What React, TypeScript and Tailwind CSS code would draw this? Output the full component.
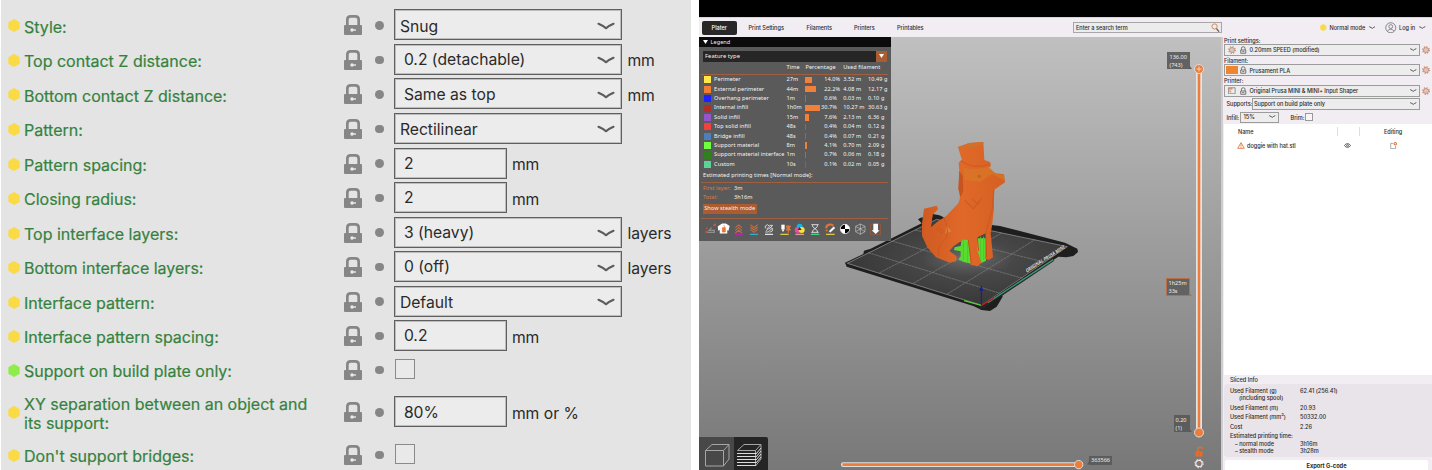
import React from "react";

type Setting = {
  label: string;
  kind: "select" | "combo" | "input" | "check";
  value?: string;
  unit?: string;
  green?: boolean;
  h?: string;
};

const settings: Setting[] = [
  { label: "Style:", kind: "select", value: "Snug" },
  { label: "Top contact Z distance:", kind: "combo", value: "0.2 (detachable)", unit: "mm" },
  { label: "Bottom contact Z distance:", kind: "combo", value: "Same as top", unit: "mm" },
  { label: "Pattern:", kind: "select", value: "Rectilinear" },
  { label: "Pattern spacing:", kind: "input", value: "2", unit: "mm" },
  { label: "Closing radius:", kind: "input", value: "2", unit: "mm" },
  { label: "Top interface layers:", kind: "combo", value: "3 (heavy)", unit: "layers" },
  { label: "Bottom interface layers:", kind: "combo", value: "0 (off)", unit: "layers" },
  { label: "Interface pattern:", kind: "select", value: "Default" },
  { label: "Interface pattern spacing:", kind: "input", value: "0.2", unit: "mm" },
  { label: "Support on build plate only:", kind: "check", green: true, h: "h-[33px]" },
  { label: "XY separation between an object and its support:", kind: "input", value: "80%", unit: "mm or %", h: "h-[52px]" },
  { label: "Don't support bridges:", kind: "check", h: "h-[33px]" },
];

function Hex({ className }: { className: string }) {
  return (
    <svg viewBox="0 0 12 13" className={className}>
      <path d="M6 .4 11.2 3.3V9.7L6 12.6.8 9.7V3.3Z" fill="currentColor" stroke="currentColor" strokeWidth=".8" strokeLinejoin="round" />
    </svg>
  );
}

function BigLock() {
  return (
    <svg viewBox="0 0 54 60" className="h-5 w-[18px] shrink-0">
      <path d="M10 32V14Q10 4 20 4H34Q44 4 44 14V32" fill="none" stroke="#868686" strokeWidth="8" />
      <rect y="30" width="54" height="30" rx="3" fill="#868686" />
      <circle cx="24" cy="45" r="5" fill="#ececec" />
      <path d="M24 45H36" stroke="#ececec" strokeWidth="4" />
    </svg>
  );
}

function Chevron({ className }: { className: string }) {
  return (
    <svg viewBox="0 0 18 9" className={className} fill="none" stroke="currentColor" strokeWidth="2.2" strokeLinecap="round" strokeLinejoin="round">
      <path d="M1.5 1.8 Q7 4.2 9 6.2 Q11 4.2 16.5 1.8" />
    </svg>
  );
}

function SettingRow({ s }: { s: Setting }) {
  const wide = s.kind === "select" || s.kind === "combo";
  return (
    <div className={`flex shrink-0 items-center ${s.h ?? "h-[34.52px]"}`}>
      <Hex className={`relative top-px h-[13px] w-3 shrink-0 ${s.green ? "text-[#8fec4b]" : "text-[#fadb45]"}`} />
      <div className="ml-[4px] w-[320.3px] shrink-0 pr-5 pt-[4px] text-[16px] leading-[18.7px] text-[#35823e] [text-stroke:0.2px] [-webkit-text-stroke:0.2px_#35823e]">{s.label}</div>
      <div className="relative top-[0.5px] flex items-center">
        <BigLock />
        <div className="ml-[12.8px] size-[8.6px] rounded-full bg-[#868686]" />
      </div>
      {s.kind === "check" ? (
        <div className="ml-[11.5px] size-5 border-[1.4px] border-[#8a8a8a] bg-[#e9e9e9]" />
      ) : (
        <div className={`ml-[10.7px] flex h-[31px] items-center justify-between border border-[#5f5f5f] bg-[#ececec] pr-[6.5px] shadow-[inset_0_0_0_1px_#bdbdbd] ${wide ? "w-[228px]" : "w-[112.5px]"} ${s.kind === "select" ? "pl-[4.5px]" : "pl-[8.5px]"}`}>
          <span className={s.kind === "select" ? "pt-[4px]" : "pt-[1.5px]"}>{s.value}</span>
          {wide && <Chevron className="mt-[3px] h-[9px] w-[18px] text-[#5c5c5c]" />}
        </div>
      )}
      {s.unit && <span className="ml-[5px] pt-[4px]">{s.unit}</span>}
    </div>
  );
}

const legend: [string, string, string, string, string, string, string][] = [
  ["bg-[#ffe64d]", "Perimeter", "27m", "14.0%", "3.52 m", "10.49 g", "w-[7px]"],
  ["bg-[#f07c35]", "External perimeter", "44m", "22.2%", "4.08 m", "12.17 g", "w-[11px]"],
  ["bg-[#1f1fff]", "Overhang perimeter", "1m", "0.6%", "0.03 m", "0.10 g", "w-[0.5px] opacity-50"],
  ["bg-[#b03029]", "Internal infill", "1h0m", "30.7%", "10.27 m", "30.63 g", "w-[14.5px]"],
  ["bg-[#9654cc]", "Solid infill", "15m", "7.6%", "2.13 m", "6.36 g", "w-[4px]"],
  ["bg-[#f04040]", "Top solid infill", "48s", "0.4%", "0.04 m", "0.12 g", "w-[0.5px] opacity-40"],
  ["bg-[#4d80ba]", "Bridge infill", "48s", "0.4%", "0.07 m", "0.21 g", "w-[0.5px] opacity-40"],
  ["bg-[#70ff40]", "Support material", "8m", "4.1%", "0.70 m", "2.09 g", "w-[2px]"],
  ["bg-[#308020]", "Support material interface", "1m", "0.7%", "0.06 m", "0.18 g", "w-[0.5px] opacity-50"],
  ["bg-[#5ed194]", "Custom", "10s", "0.1%", "0.02 m", "0.05 g", "w-[0.5px] opacity-30"],
];

function LegendIcons() {
  return (
    <svg viewBox="0 0 570 48" className="mt-[1.5px] h-4 w-[190px] shrink-0" fill="none" strokeWidth="3.5">
      <g stroke="#b9623a">
        <path d="M22 34H46V28H30L38 20" stroke="#8f8f8f" />
        <path d="M21 24l4-4M44 14l6-6" />
        <circle cx="23" cy="33" r="2" />
        <circle cx="47" cy="12" r="2" fill="#b9623a" />
      </g>
      <path d="M58 17 70 9H80L90 16 87 27 83 23V36H64V23L59 26Z" fill="#fff" stroke="#fff" />
      <path d="M70 20h9v13h-9zM74 12l4 8" fill="#e8752f" stroke="#e8752f" strokeWidth="2" />
      <path d="M109 20l10-8 10 8M109 28l10-8 10 8M109 36l10-8 10 8" stroke="#c9683a" />
      <path d="M107 40h24" stroke="#c11fc1" />
      <path d="M154 11l11 9 11-9M154 18l11 9 11-9M154 25l11 9 11-9" stroke="#c9683a" />
      <path d="M153 40h24" stroke="#2fb6cf" />
      <path d="M199 22v-7l7-4 5 5-8 8M211 13h10l-9 10M199 33h9l12-12v9l-8 4M201 29l18-13" stroke="#e8e8e8" strokeWidth="2.5" />
      <path d="M198 40h24" stroke="#eee" />
      <path d="M247 11h10v13h-10z" fill="#fff" />
      <path d="M247 25h10l-5 8z" fill="#fff" />
      <path d="M262 15h12l-3 7 4 5h-14l4-5zM268 27v9" fill="#e8752f" stroke="#e8752f" strokeWidth="3" />
      <path d="M244 40h25" stroke="#e8d34a" />
      <circle cx="302" cy="17" r="9" fill="#19b5e0" />
      <circle cx="296" cy="27" r="9" fill="#e84fa0" />
      <circle cx="308" cy="27" r="9" fill="#f3e53b" />
      <path d="M302 18l6 9h-12z" fill="#333" />
      <path d="M289 40h26" stroke="#f0a0a0" />
      <path d="M337 11h22M337 34h22M341 12v5l7 6 7-6v-5M341 34v-5l7-6 7 6v5" stroke="#eee" strokeWidth="2.5" />
      <path d="M336 40h25" stroke="#3fe08a" />
      <path d="M382 22a12 10 0 0 1 21-8M383 26v5" stroke="#e8752f" strokeWidth="6" />
      <path d="M390 31l14-14 4 4-14 13z" fill="#fff" stroke="#fff" strokeWidth="1" />
      <path d="M381 40h26" stroke="#e8d34a" />
      <circle cx="438" cy="24" r="14" fill="#fff" stroke="#fff" strokeWidth="2" />
      <path d="M438 24V11A13 13 0 0 0 425 24ZM438 24V37A13 13 0 0 0 451 24Z" fill="#000" />
      <path d="M484 9l14 7v16l-14 8-14-8V16zM470 16l14 8 14-8M484 24v16M470 32l14-8 14 8M484 9v15" stroke="#c4c4c4" strokeWidth="2" />
      <rect x="515" y="9" width="30" height="31" stroke="#a05a36" strokeWidth="2" />
      <path d="M523 8h14v20h5l-12 11-12-11h5z" fill="#fff" />
    </svg>
  );
}

function Legend() {
  return (
    <div className="absolute left-0 top-0 flex h-[204px] w-[191.5px] flex-col bg-[#5a5a5a] font-['Noto_Sans','Open_Sans',sans-serif] text-[5.55px] font-normal leading-[9.4px] tracking-[0.07px] whitespace-nowrap text-[#f4f4f4]">
      <div className="flex h-[10px] shrink-0 items-center bg-[#0b0b0b] pl-[3.5px]">
        <svg viewBox="0 0 10 8" className="h-[4px] w-[5px]"><path d="M0 0h10L5 8z" fill="#fff" /></svg>
        <span className="ml-[3px] pt-[1.5px]">Legend</span>
      </div>
      <div className="ml-1 mt-[4px] flex h-[10.7px] w-[184px] shrink-0 items-center justify-between bg-[#262626]">
        <span className="ml-[2px] pt-[1px] text-[5.8px]">Feature type</span>
        <div className="flex h-full w-[11px] items-center justify-center bg-[#ab5c31]">
          <svg viewBox="0 0 10 8" className="h-[4px] w-[5px]"><path d="M0 0h10L5 8z" fill="#fff" /></svg>
        </div>
      </div>
      <div className="mt-[1px] flex h-[10.5px] shrink-0 items-center">
        <span className="ml-[87.5px] w-[19px]">Time</span>
        <span className="w-[37.7px]">Percentage</span>
        <span>Used filament</span>
      </div>
      <div className="ml-[2px] mt-px h-px w-[187px] shrink-0 bg-[#a0603f]" />
      {legend.map(([c, name, time, pct, m, g, w]) => (
        <div key={name} className="flex h-[9.4px] shrink-0 items-center">
          <div className={`ml-[4.5px] h-[7px] w-[7px] ${c}`} />
          <span className="ml-[3.6px] w-[72.4px]">{name}</span>
          <span className="w-[19px]">{time}</span>
          <span className="flex w-[18.8px]"><span className={`h-[6.4px] bg-[#f0803c] ${w}`} /></span>
          <span className={pct === "30.7%" ? "-ml-[3.4px] w-[22.4px]" : "w-[19px]"}>{pct}</span>
          <span className="w-[24.8px]">{m}</span>
          <span>{g}</span>
        </div>
      ))}
      <div className="mt-[2px] pl-1">Estimated printing times [Normal mode]:</div>
      <div className="ml-[2px] mt-px h-px w-[187px] shrink-0 bg-[#a0603f]" />
      <div className="mt-[1.5px] flex pl-1"><span className="w-[31px] text-[#dd7a45]">First layer:</span>3m</div>
      <div className="flex pl-1"><span className="w-[31px] text-[#dd7a45]">Total:</span>3h16m</div>
      <div className="ml-1 mt-[1px] flex h-[10.4px] w-[53.5px] shrink-0 items-center justify-center bg-[#ab5c31]">Show stealth mode</div>
      <div className="ml-[2px] mt-[4px] h-px w-[187px] shrink-0 bg-[#a0603f]" />
      <LegendIcons />
    </div>
  );
}

function Scene() {
  return (
    <svg viewBox="0 0 750 570" className="absolute left-[141px] top-[93px] h-[190px] w-[250px]">
      <defs>
        <radialGradient id="bed" cx=".55" cy=".45" r=".6">
          <stop offset="0" stopColor="#6a6a6a" />
          <stop offset=".35" stopColor="#474747" />
          <stop offset="1" stopColor="#363636" />
        </radialGradient>
        <linearGradient id="fur" x1="0" x2="1">
          <stop offset="0" stopColor="#cf5a20" />
          <stop offset=".5" stopColor="#e0692a" />
          <stop offset="1" stopColor="#d55f20" />
        </linearGradient>
      </defs>
      <path d="M15 398L70 372 72 362 92 356 245 280 234 268 242 263 270 258 278 252 298 256 330 270 480 288 675 338 712 356 714 366 700 378 680 382 655 380 486 492 488 500 470 530 450 543 425 540 400 528 20 410Z" fill="#1e1e1e" />
      <path d="M22 400L290 268 682 350 425 526Z" fill="url(#bed)" stroke="#a0a0a0" strokeWidth="2" />
      <path d="M420 536L640 388" stroke="#262626" strokeWidth="10" />
      <g stroke="#8b8b8b" strokeWidth="1.7" fill="none" strokeDasharray="9 1.5">
        <path d="M118 429L385 288M220 460L485 309M322 492L585 329" />
        <path d="M85 368L480 490M155 333L548 445M225 300L612 396" />
      </g>
      <path d="M443 518L640 389" stroke="#3b9677" strokeWidth="4" />
      <text transform="matrix(.83 -.53 .35 .94 560 428)" fontFamily="Noto Sans, sans-serif" fontSize="15" fontWeight="700" fill="#ddd" textLength="138" lengthAdjust="spacingAndGlyphs">ORIGINAL PRUSA MINI</text>
      <path d="M365 325H438V392L425 398 400 402 372 396 355 388 362 380 362 364 342 360 344 352 362 348Z" fill="#59dc31" />
      <path d="M370 330V392M383 335V396M422 320V396M431 320V390" stroke="#4cc72b" strokeWidth="3" />
      <path d="M252 236L290 227 294 238 278 254 273 292 292 275 318 259 355 220 360 205 356 172 358 122 356 98 366 88 362 78 354 51 388 39 430 36 433 90 450 96 453 107 446 114 466 130 492 133 495 157 462 180 462 235 456 288 452 310 458 370 459 382 448 389 435 386 438 310 414 321 412 360 424 400 412 409 392 404 385 330 370 329 342 347 328 363 350 379 348 394 330 398 288 382 262 352 246 318 246 280Z" fill="url(#fur)" />
      <path d="M354 51L388 39 430 36 429 44 402 50 360 57Z" fill="#d0702a" />
      <path d="M371 113Q410 125 447 108L464 131 491 135 493 152 458 132 420 155 374 150Z" fill="#d77b27" opacity=".6" />
      <path d="M363 92Q400 119 449 103M374 210L400 236 426 204M397 208L414 223 425 205" stroke="#cf5c22" strokeWidth="4" fill="none" />
      <path d="M358 122L368 137 370 182 362 202 355 178Z" fill="#c5541e" />
      <circle cx="418" cy="139" r="5" fill="#c0641f" />
      <path d="M278 254L272 292 284 324 270 348 253 320 252 278Z" fill="#d35d24" />
      <path d="M320 286l15 18-20 7z" fill="#dd7f35" />
      <path d="M310 262Q330 298 318 326Q288 352 296 376M288 298l20 12M294 292l20 14M462 180L456 240 438 308" stroke="#cc5822" strokeWidth="3" fill="none" />
      <path d="M385 330L394 401M412 322L416 363M437 310L440 380" stroke="#c5531f" strokeWidth="3" />
      <path d="M372 512L424 526" stroke="#55cf38" strokeWidth="4" />
      <path d="M424 526L460 505" stroke="#b52222" strokeWidth="4" />
      <path d="M424 526V476" stroke="#1b1b91" strokeWidth="3" />
      <path d="M424 466L430 482H418Z" fill="#1b1b91" />
    </svg>
  );
}

function Gear({ className }: { className: string }) {
  return (
    <svg viewBox="0 0 20 20" className={className} fill="none" stroke="currentColor">
      <circle cx="10" cy="10" r="6" strokeWidth="2.4" />
      <circle cx="10" cy="10" r="8.4" strokeWidth="2.6" strokeDasharray="3.3 3.3" />
      <circle cx="10" cy="10" r="3" stroke="#999" strokeWidth="1.4" />
    </svg>
  );
}

function SmallLock() {
  return (
    <svg viewBox="0 0 18 22" className="h-[8px] w-[6.5px] shrink-0" fill="none" stroke="#6d6d6d" strokeWidth="2.6">
      <path d="M4 11V6Q4 2 9 2T14 6V11M2 11H16V20H2ZM6 15.5h6" />
    </svg>
  );
}

function Preset({ icon, text }: { icon: React.ReactNode; text: string }) {
  return (
    <div className="flex h-[12px] shrink-0 items-center">
      <div className="flex h-[12px] w-[196px] items-center border border-[#9c9c9c] bg-[#ededed] pr-[2.5px]">
        <div className="flex w-[13.5px] shrink-0 items-center justify-center">{icon}</div>
        <div className="ml-[1.5px] flex"><SmallLock /></div>
        <span className="ml-[3px] grow pt-[0.5px]">{text}</span>
        <Chevron className="h-[3.5px] w-[6.5px] text-[#333]" />
      </div>
      <Gear className="ml-[2px] size-[8px] text-[#cf7d5a]" />
    </div>
  );
}

function Sidebar() {
  return (
    <div className="flex h-[433px] w-[211px] flex-col border-l-2 border-[#cfccd1] bg-[#f1edf3] pl-[1px] leading-[8px]">
      <div className="h-[7px] shrink-0 leading-[8px]">Print settings:</div>
      <Preset icon={<Gear className="size-[8px] text-[#c08466]" />} text="0.20mm SPEED (modified)" />
      <div className="h-[8.3px] shrink-0 leading-[10px]">Filament:</div>
      <Preset icon={<span className="h-[8px] w-[12px] bg-[#ee8530]" />} text="Prusament PLA" />
      <div className="h-[8.3px] shrink-0 leading-[10px]">Printer:</div>
      <Preset
        icon={<svg viewBox="0 0 20 20" className="size-[7.5px]" fill="none" stroke="#777" strokeWidth="2"><path d="M1 2H19V18H1Z" /><path d="M1 5H12" stroke="#d9713a" strokeWidth="3" /><path d="M5 8v5h4" stroke="#d9713a" /></svg>}
        text="Original Prusa MINI & MINI+ Input Shaper"
      />
      <div className="mt-[1.3px] flex h-[12px] shrink-0 items-center pl-[2.5px]">
        <span className="w-[25.5px] pt-[1px]">Supports:</span>
        <div className="flex h-[11.5px] w-[168px] items-center justify-between border border-[#9c9c9c] bg-[#ededed] pl-[1px] pr-[2.5px]">
          Support on build plate only
          <Chevron className="h-[3.5px] w-[6.5px] text-[#333]" />
        </div>
      </div>
      <div className="mt-[1.6px] flex h-[11.5px] shrink-0 items-center pl-[2.5px]">
        <span className="w-[13px] pt-[1px]">Infill:</span>
        <div className="flex h-[11px] w-[39px] items-center justify-between border border-[#9c9c9c] bg-[#ededed] pl-[3px] pr-[2px]">
          15%
          <Chevron className="h-[3.5px] w-[6.5px] text-[#333]" />
        </div>
        <span className="ml-[12px] w-[14.5px] pt-[1px]">Brim:</span>
        <div className="size-[7.5px] border border-[#999] bg-[#f6f6f6]" />
      </div>
      <div className="mt-[1px] flex h-[251px] shrink-0 flex-col bg-white">
        <div className="mt-[2.5px] flex h-[11px] shrink-0 items-center">
          <span className="ml-[14px] w-[98.5px]">Name</span>
          <div className="h-[9px] w-[23.5px] border-x border-[#dedede]" />
          <span className="ml-[24px]">Editing</span>
        </div>
        <div className="mt-[3px] flex h-[11px] items-center">
          <svg viewBox="0 0 22 20" className="ml-[13px] h-[7px] w-[8px]" fill="none" stroke="#df7340" strokeWidth="2.5"><path d="M11 2 20.5 18H1.5ZM11 7v6M11 14.5v2" /></svg>
          <span className="ml-[2px] w-[97px]">doggie with hat.stl</span>
          <svg viewBox="0 0 20 14" className="h-[5px] w-[7px]" fill="none" stroke="#555" strokeWidth="2.5"><path d="M1 7Q10-4 19 7Q10 18 1 7Z" /><circle cx="10" cy="7" r="2.5" /></svg>
          <svg viewBox="0 0 20 20" className="ml-[39px] size-[7px]" fill="none" stroke="#888" strokeWidth="2"><path d="M9 4H2V19H16V11" /><circle cx="15" cy="5" r="3.5" stroke="#df7340" strokeWidth="3" /></svg>
        </div>
      </div>
      <div className="flex h-[9px] shrink-0 items-center pl-[6px] pt-[2px]">Sliced Info</div>
      <div className="flex h-[73.5px] shrink-0 flex-col rounded-l-sm bg-[#e8e4e9] pl-[6px] pt-[3.5px]">
        <Info k="Used Filament (g)" v="62.41 (256.41)" c="h-[7.5px]" />
        <Info k="(including spool)" v="" c="h-[7px] pl-[9px]" />
        <Info k="Used Filament (m)" v="20.93" c="mt-[1.2px] h-[9.4px]" />
        <Info k="Used Filament (mm³)" v="50332.00" c="h-[9.4px]" />
        <Info k="Cost" v="2.26" c="h-[9.4px]" />
        <Info k="Estimated printing time:" v="" c="h-[9.2px]" />
        <Info k="– normal mode" v="3h16m" c="-mt-[0.5px] h-[7px] pl-[5px]" />
        <Info k="– stealth mode" v="3h28m" c="h-[7px] pl-[5px]" />
      </div>
      <div className="ml-[1px] mt-[2.5px] flex h-[10px] w-[203px] shrink-0 items-center justify-center rounded-t-xs bg-white pt-[2px] text-[5.7px] font-bold">Export G-code</div>
    </div>
  );
}

function Info({ k, v, c }: { k: string; v: string; c: string }) {
  return (
    <div className={`flex shrink-0 items-center ${c}`}>
      <span className="grow">{k}</span>
      <span className="w-[132px]">{v}</span>
    </div>
  );
}

function Viewport() {
  return (
    <div className="relative h-[433px] w-[522px] shrink-0 overflow-hidden bg-linear-to-b from-[#c0c0c0] to-[#787878]">
      <Scene />
      <Legend />
      <svg viewBox="0 0 69 33" className="absolute bottom-0 left-0 h-[33px] w-[69px]" fill="none">
        <path d="M0 0H35V33H0Z" fill="#484848" />
        <path d="M35 0H67Q69 0 69 2V33H35Z" fill="#252525" />
        <g stroke="#a5a5a5">
          <path d="M6.5 13.5H24.5V29H6.5ZM6.5 13.5L13 7.5H30L24.5 13.5M30 7.5V22L24.5 29" />
          <path d="M38.5 13.5H56.5L62 7.5H45ZM56.5 13.5V29M62 8V22L56.5 29" />
          <path d="M38 16.5h19M38 19.5h19M38 22.5h19M38 25.5h19M38 28.5h19M57 17l5-6M57 20l5-6M57 23l5-6M57 26l5-6" stroke="#dcdcdc" />
        </g>
      </svg>
      <svg viewBox="0 0 250 14" className="absolute left-[140px] top-[421px] h-[14px] w-[250px]">
        <rect x="2" y="4.2" width="240" height="4.8" rx="2" fill="#dfdfdf" />
        <path d="M3.5 6.6H238" stroke="#ed7d3b" strokeWidth="2.6" />
        <circle cx="239.7" cy="6.6" r="4.2" fill="#ed7d3b" stroke="#ddd" />
      </svg>
      <svg viewBox="0 0 20 420" className="absolute left-[490px] top-[20px] h-[420px] w-[20px]">
        <rect x="7" y="10" width="6" height="368" rx="3" fill="#e4e4e4" />
        <path d="M10 12V376" stroke="#ed7d3b" strokeWidth="2.6" />
        <circle cx="10" cy="12" r="4.5" fill="#ed7d3b" stroke="#ddd" />
        <path d="M7.5 12h5M10 9.5v5" stroke="#f6cdb5" strokeWidth="1" />
        <circle cx="10" cy="375.5" r="4.5" fill="#ed7d3b" stroke="#ddd" />
        <path d="M6.5 394.5h7v5h-7z" fill="#ed6b21" />
        <path d="M8.8 395v-2.8q0-2 2.2-2t2.3 1.8" stroke="#ed6b21" strokeWidth="1.4" fill="none" />
        <circle cx="10" cy="397" r="0.8" fill="#777" />
        <circle cx="10" cy="406.5" r="3.2" fill="#8d7467" stroke="#e8e8e8" strokeWidth="1.3" />
        <circle cx="10" cy="406.5" r="4.2" fill="none" stroke="#e8e8e8" strokeDasharray="1.6 1.7" />
      </svg>
      <div className="absolute left-0 top-0 font-['Noto_Sans',sans-serif] text-[5.6px] font-normal leading-[8px] text-[#ededed]">
        <div className="absolute left-[468px] top-[15px] h-[17px] w-[22.5px] bg-[#626262] pl-[2.5px] pt-[1px]">136.00<br />(743)</div>
        <div className="absolute left-[467px] top-[241px] h-[18px] w-[24px] border border-[#b66f46] bg-[#626262] pl-[1.5px] pt-[1px] leading-[7.5px]">1h25m<br />33s</div>
        <div className="absolute left-[474.5px] top-[378px] h-[17px] w-[16px] bg-[#5c5c5c] pl-[2px] pt-[1px]">0.20<br />(1)</div>
        <div className="absolute left-[390px] top-[418.5px] h-[9px] w-[23px] bg-[#5c5c5c] pl-[2px]">363566</div>
      </div>
      <svg viewBox="0 0 522 433" className="absolute left-0 top-0 h-[433px] w-[522px]">
        <path d="M490 28l3 4h-3zM388 427.5l3-5v5z" fill="#5c5c5c" />
        <path d="M490 255l3 4h-3z" fill="#b66f46" />
        <path d="M490 391l3 4h-3z" fill="#5c5c5c" />
      </svg>
    </div>
  );
}

function NavBar() {
  return (
    <div className="flex h-[20px] shrink-0 items-center border-t border-[#d6d4d8] bg-[#f1edf3]">
      <div className="ml-[2.5px] flex h-[14px] w-[35.5px] items-center justify-center rounded-xs bg-[#272727] text-white">Plater</div>
      <span className="ml-[11.5px] w-[58px]">Print Settings</span>
      <span className="w-[47.5px]">Filaments</span>
      <span className="w-[43px]">Printers</span>
      <span className="w-[175.5px]">Printables</span>
      <div className="flex h-[11.5px] w-[149px] items-center justify-between border border-[#a6a6a6] bg-[#ececec] pl-[2.5px] pr-[1px]">
        <span>Enter a search term</span>
        <svg viewBox="0 0 24 26" className="h-[9px] w-[8.5px]" fill="none"><circle cx="10" cy="10" r="7.5" stroke="#d98354" strokeWidth="2.8" /><path d="M15.5 16L23 25" stroke="#555" strokeWidth="3.5" /></svg>
      </div>
      <Hex className="ml-[98.5px] h-[7px] w-[6.5px] text-[#fadb45]" />
      <span className="ml-[3px] w-[39px]">Normal mode</span>
      <Chevron className="h-[3.5px] w-[6.5px] text-[#333]" />
      <svg viewBox="0 0 24 24" className="ml-[10px] size-[11.5px]" fill="none" stroke="#777" strokeWidth="1.8"><circle cx="12" cy="12" r="10.5" /><circle cx="12" cy="9.5" r="4" /><path d="M5 19Q12 11 19 19" /></svg>
      <span className="ml-[2.5px] w-[20px]">Log in</span>
      <Chevron className="h-[3.5px] w-[6.5px] text-[#333]" />
    </div>
  );
}

export default function App() {
  return (
    <div className="flex h-[470px] w-[1432px] overflow-hidden bg-white font-['Inter',sans-serif]">
      <div className="ml-px flex w-[690px] shrink-0 flex-col bg-[#e4e4e4] pl-[7px] pt-[7.7px] text-[15.7px] leading-5 text-[#2a2a2a]">
        {settings.map((s) => (
          <SettingRow key={s.label} s={s} />
        ))}
      </div>
      <div className="ml-2 flex w-[733px] shrink-0 flex-col text-[5.6px] font-medium leading-[8px] tracking-[-0.03px] whitespace-nowrap text-[#2b2b2b]">
        <div className="h-[17px] shrink-0 bg-black" />
        <NavBar />
        <div className="flex">
          <Viewport />
          <Sidebar />
        </div>
      </div>
    </div>
  );
}
